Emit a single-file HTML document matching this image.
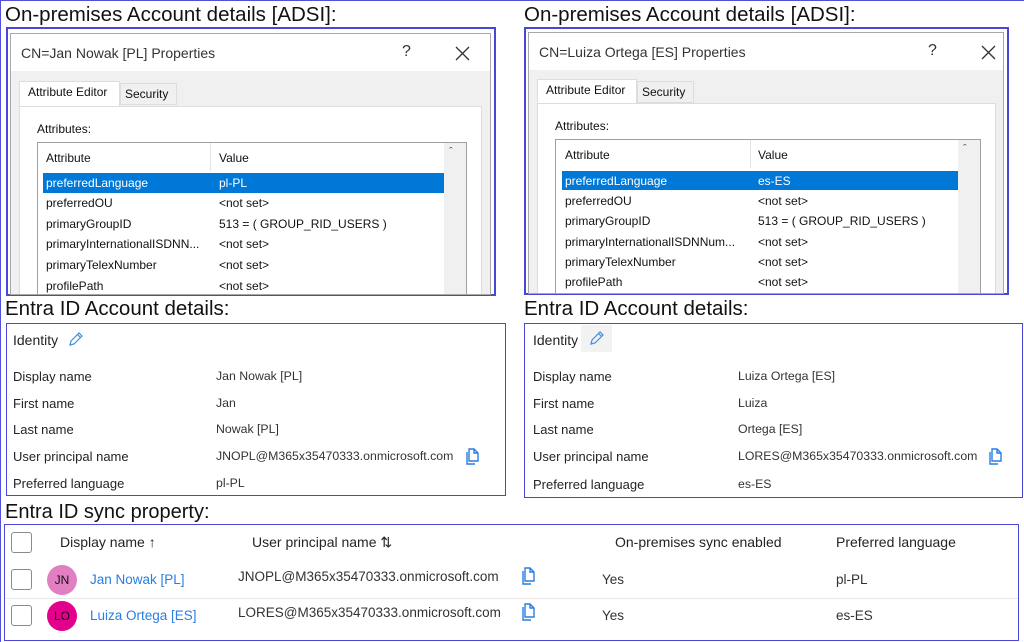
<!DOCTYPE html>
<html><head><meta charset="utf-8"><style>
*{margin:0;padding:0;box-sizing:border-box}
body{width:1024px;height:642px;position:relative;background:#fff;font-family:"Liberation Sans",sans-serif;overflow:hidden;border-top:1px solid #5050d8;border-left:1px solid #5050d8}
.a{position:absolute;white-space:nowrap}
.h{font-size:20.5px;color:#111;line-height:22px}
.frame{position:absolute;border:2px solid #4848d8}
.dlg{position:absolute;border:1px solid #a8a8a8;background:#f0f0f0;overflow:hidden}
.tb{position:absolute;left:0;right:0;top:0;height:37px;background:#fff}
.t{font-size:14px;color:#333}
.s{font-size:12px;color:#111}
.sel{position:absolute;background:#0078d7}
.lbl{font-size:13px;color:#242424}
.val{font-size:12.3px;color:#333}
.tv{font-size:13.5px;color:#333}
.cb{position:absolute;width:21px;height:21px;border:1px solid #8a8a8a;border-radius:3px;background:#fff}
.th{font-size:14px;color:#242424}
.av{position:absolute;width:30px;height:30px;border-radius:50%;font-size:12px;color:#111;text-align:center;line-height:30px}
</style></head><body>

<div class="a h" style="left:4px;top:3px">On-premises Account details [ADSI]:</div>
<div class="a h" style="left:523px;top:3px">On-premises Account details [ADSI]:</div>

<div class="frame" style="left:5px;top:26px;width:490px;height:269px"></div>
<div class="dlg" style="left:9px;top:32px;width:481px;height:262px">
 <div class="tb"></div>
 <div class="a t" style="left:10px;top:11px">CN=Jan Nowak [PL] Properties</div>
 <div class="a" style="left:391px;top:9px;font-size:16px;color:#333">?</div>
 <svg class="a" style="left:444px;top:12px" width="15" height="15"><path d="M1 1L14 14M14 1L1 14" stroke="#333" stroke-width="1.3"/></svg>
 <div class="a" style="left:8px;top:47px;width:101px;height:26px;background:#fff;border:1px solid #ddd;border-bottom:none"></div>
 <div class="a s" style="left:17px;top:51px">Attribute Editor</div>
 <div class="a" style="left:109px;top:49px;width:57px;height:22px;background:#f0f0f0;border:1px solid #ddd"></div>
 <div class="a s" style="left:114px;top:53px">Security</div>
 <div class="a" style="left:8px;top:72px;width:463px;height:200px;background:#fff;border:1px solid #ddd"></div>
 <div class="a s" style="left:26px;top:88px">Attributes:</div>
 <div class="a" style="left:26px;top:108px;width:430px;height:170px;background:#fff;border:1px solid #a0a0a0"></div>
 <div class="a" style="left:433px;top:109px;width:22px;height:160px;background:#f0f0f0"></div>
 <div class="a" style="left:438px;top:112px;font-size:11px;color:#555">&#710;</div>
 <div class="a" style="left:199px;top:109px;width:1px;height:28px;background:#e4e4e4"></div>
 <div class="a s" style="left:35px;top:117px">Attribute</div>
 <div class="a s" style="left:208px;top:117px">Value</div>
 <div class="sel" style="left:32px;top:139px;width:401px;height:20px"></div>
 <div class="a s" style="left:35px;top:142px;color:#fff">preferredLanguage</div><div class="a s" style="left:208px;top:142px;color:#fff">pl-PL</div>
 <div class="a s" style="left:35px;top:162px">preferredOU</div><div class="a s" style="left:208px;top:162px">&lt;not set&gt;</div>
 <div class="a s" style="left:35px;top:183px">primaryGroupID</div><div class="a s" style="left:208px;top:183px">513 = ( GROUP_RID_USERS )</div>
 <div class="a s" style="left:35px;top:203px">primaryInternationalISDNN...</div><div class="a s" style="left:208px;top:203px">&lt;not set&gt;</div>
 <div class="a s" style="left:35px;top:224px">primaryTelexNumber</div><div class="a s" style="left:208px;top:224px">&lt;not set&gt;</div>
 <div class="a s" style="left:35px;top:245px">profilePath</div><div class="a s" style="left:208px;top:245px">&lt;not set&gt;</div>
</div>

<div class="frame" style="left:523px;top:26px;width:485px;height:268px"></div>
<div class="dlg" style="left:527px;top:31px;width:476px;height:262px">
 <div class="tb"></div>
 <div class="a t" style="left:10px;top:11px">CN=Luiza Ortega [ES] Properties</div>
 <div class="a" style="left:399px;top:9px;font-size:16px;color:#333">?</div>
 <svg class="a" style="left:452px;top:12px" width="15" height="15"><path d="M1 1L14 14M14 1L1 14" stroke="#333" stroke-width="1.3"/></svg>
 <div class="a" style="left:8px;top:46px;width:100px;height:26px;background:#fff;border:1px solid #ddd;border-bottom:none"></div>
 <div class="a s" style="left:17px;top:50px">Attribute Editor</div>
 <div class="a" style="left:108px;top:48px;width:57px;height:22px;background:#f0f0f0;border:1px solid #ddd"></div>
 <div class="a s" style="left:113px;top:52px">Security</div>
 <div class="a" style="left:8px;top:70px;width:459px;height:200px;background:#fff;border:1px solid #ddd"></div>
 <div class="a s" style="left:26px;top:86px">Attributes:</div>
 <div class="a" style="left:26px;top:106px;width:426px;height:170px;background:#fff;border:1px solid #a0a0a0"></div>
 <div class="a" style="left:429px;top:107px;width:22px;height:160px;background:#f0f0f0"></div>
 <div class="a" style="left:434px;top:110px;font-size:11px;color:#555">&#710;</div>
 <div class="a" style="left:221px;top:107px;width:1px;height:28px;background:#e4e4e4"></div>
 <div class="a s" style="left:36px;top:115px">Attribute</div>
 <div class="a s" style="left:229px;top:115px">Value</div>
 <div class="sel" style="left:33px;top:138px;width:396px;height:19px"></div>
 <div class="a s" style="left:36px;top:141px;color:#fff">preferredLanguage</div><div class="a s" style="left:229px;top:141px;color:#fff">es-ES</div>
 <div class="a s" style="left:36px;top:161px">preferredOU</div><div class="a s" style="left:229px;top:161px">&lt;not set&gt;</div>
 <div class="a s" style="left:36px;top:181px">primaryGroupID</div><div class="a s" style="left:229px;top:181px">513 = ( GROUP_RID_USERS )</div>
 <div class="a s" style="left:36px;top:202px">primaryInternationalISDNNum...</div><div class="a s" style="left:229px;top:202px">&lt;not set&gt;</div>
 <div class="a s" style="left:36px;top:222px">primaryTelexNumber</div><div class="a s" style="left:229px;top:222px">&lt;not set&gt;</div>
 <div class="a s" style="left:36px;top:242px">profilePath</div><div class="a s" style="left:229px;top:242px">&lt;not set&gt;</div>
</div>

<div class="a h" style="left:4px;top:297px">Entra ID Account details:</div>
<div class="a h" style="left:523px;top:297px">Entra ID Account details:</div>

<div class="frame" style="left:5px;top:322px;width:500px;height:173px;border-width:1.5px"></div>
<div class="a" style="left:12px;top:331px;font-size:14px;color:#242424">Identity</div>
<svg class="a" style="left:67px;top:330px" width="16" height="16"><path d="M2 14L3 10L11 2L14 5L6 13Z M9.5 3.5L12.5 6.5" fill="none" stroke="#3a8ee6" stroke-width="1.2"/></svg>
<div class="a lbl" style="left:12px;top:368px">Display name</div><div class="a val" style="left:215px;top:368px">Jan Nowak [PL]</div>
<div class="a lbl" style="left:12px;top:395px">First name</div><div class="a val" style="left:215px;top:395px">Jan</div>
<div class="a lbl" style="left:12px;top:421px">Last name</div><div class="a val" style="left:215px;top:421px">Nowak [PL]</div>
<div class="a lbl" style="left:12px;top:448px">User principal name</div><div class="a val" style="left:215px;top:448px">JNOPL@M365x35470333.onmicrosoft.com</div>
<svg class="a" style="left:463px;top:447px" width="16" height="17"><path d="M5 1H10L14 5V13H5Z M10 1V5H14 M3 4V16H11" fill="none" stroke="#2a7de1" stroke-width="1.4"/></svg>
<div class="a lbl" style="left:12px;top:475px">Preferred language</div><div class="a val" style="left:215px;top:475px">pl-PL</div>

<div class="frame" style="left:523px;top:322px;width:499px;height:175px;border-width:1.5px"></div>
<div class="a" style="left:580px;top:324px;width:31px;height:27px;background:#f2f2f2"></div>
<div class="a" style="left:532px;top:331px;font-size:14px;color:#242424">Identity</div>
<svg class="a" style="left:588px;top:329px" width="16" height="16"><path d="M2 14L3 10L11 2L14 5L6 13Z M9.5 3.5L12.5 6.5" fill="none" stroke="#3a8ee6" stroke-width="1.2"/></svg>
<div class="a lbl" style="left:532px;top:368px">Display name</div><div class="a val" style="left:737px;top:368px">Luiza Ortega [ES]</div>
<div class="a lbl" style="left:532px;top:395px">First name</div><div class="a val" style="left:737px;top:395px">Luiza</div>
<div class="a lbl" style="left:532px;top:421px">Last name</div><div class="a val" style="left:737px;top:421px">Ortega [ES]</div>
<div class="a lbl" style="left:532px;top:448px">User principal name</div><div class="a val" style="left:737px;top:448px">LORES@M365x35470333.onmicrosoft.com</div>
<svg class="a" style="left:986px;top:447px" width="16" height="17"><path d="M5 1H10L14 5V13H5Z M10 1V5H14 M3 4V16H11" fill="none" stroke="#2a7de1" stroke-width="1.4"/></svg>
<div class="a lbl" style="left:532px;top:476px">Preferred language</div><div class="a val" style="left:737px;top:476px">es-ES</div>

<div class="a h" style="left:4px;top:500px;font-size:20px">Entra ID sync property:</div>
<div class="frame" style="left:3px;top:523px;width:1015px;height:117px;border-width:1.5px"></div>
<div class="cb" style="left:10px;top:531px"></div>
<div class="a th" style="left:59px;top:533px">Display name ↑</div>
<div class="a th" style="left:251px;top:533px">User principal name ⇅</div>
<div class="a th" style="left:614px;top:533px">On-premises sync enabled</div>
<div class="a th" style="left:835px;top:533px">Preferred language</div>

<div class="cb" style="left:10px;top:568px"></div>
<div class="av" style="left:46px;top:564px;background:#e27ec2">JN</div>
<div class="a" style="left:89px;top:571px;font-size:13.5px;color:#2a7de1">Jan Nowak [PL]</div>
<div class="a tv" style="left:237px;top:568px">JNOPL@M365x35470333.onmicrosoft.com</div>
<svg class="a" style="left:519px;top:566px" width="16" height="18"><path d="M5 1H10L14 5V14H5Z M10 1V5H14 M3 4V17H11" fill="none" stroke="#2a7de1" stroke-width="1.4"/></svg>
<div class="a tv" style="left:601px;top:571px">Yes</div>
<div class="a tv" style="left:835px;top:571px">pl-PL</div>
<div class="a" style="left:5px;top:597px;width:1012px;height:1px;background:#e8e8e8"></div>

<div class="cb" style="left:10px;top:604px"></div>
<div class="av" style="left:46px;top:600px;background:#e3008c">LO</div>
<div class="a" style="left:89px;top:607px;font-size:13.5px;color:#2a7de1">Luiza Ortega [ES]</div>
<div class="a tv" style="left:237px;top:604px">LORES@M365x35470333.onmicrosoft.com</div>
<svg class="a" style="left:519px;top:602px" width="16" height="18"><path d="M5 1H10L14 5V14H5Z M10 1V5H14 M3 4V17H11" fill="none" stroke="#2a7de1" stroke-width="1.4"/></svg>
<div class="a tv" style="left:601px;top:607px">Yes</div>
<div class="a tv" style="left:835px;top:607px">es-ES</div>

</body></html>
